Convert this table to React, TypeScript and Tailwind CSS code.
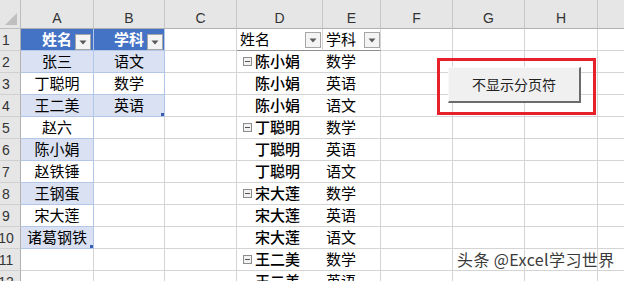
import React from "react";

const FONT = "font-['Noto_Sans_CJK_SC',sans-serif]";

const aVals = ["姓名", "张三", "丁聪明", "王二美", "赵六", "陈小娟", "赵铁锤", "王钢蛋", "宋大莲", "诸葛钢铁"];
const bVals = ["学科", "语文", "数学", "英语"];
const pivot: [string, string, boolean][] = [
  ["陈小娟", "数学", true],
  ["陈小娟", "英语", false],
  ["陈小娟", "语文", false],
  ["丁聪明", "数学", true],
  ["丁聪明", "英语", false],
  ["丁聪明", "语文", false],
  ["宋大莲", "数学", true],
  ["宋大莲", "英语", false],
  ["宋大莲", "语文", false],
  ["王二美", "数学", true],
  ["王二美", "英语", false],
];

function FilterBtn() {
  return (
    <div className="w-[16px] h-[16px] bg-[#f4f4f4] border border-[#a6a6a6] flex items-center justify-center">
      <svg width="8" height="5" viewBox="0 0 8 5">
        <polygon points="0.5,0.5 7.5,0.5 4,4.5" fill="#5a5a5a" />
      </svg>
    </div>
  );
}

function MinusBox() {
  return (
    <div className="w-[9px] h-[9px] border border-[#8c8c8c] bg-[#f2f2f2] flex items-center justify-center mr-[3px]">
      <div className="w-[5px] h-[1px] bg-[#555]" />
    </div>
  );
}

function Handle() {
  return <div className="absolute right-0 bottom-0 w-[3px] h-[3px] bg-[#3a5fb0]" />;
}

export default function App() {
  const cols = ["A", "B", "C", "D", "E", "F", "G", "H", ""];
  const rows = Array.from({ length: 12 }, (_, i) => i + 1);

  return (
    <div className={`relative w-[624px] h-[281px] overflow-hidden bg-white ${FONT}`}>
      <div className="grid grid-cols-[21px_73px_71px_72px_86px_58px_72px_72px_73px_60px] grid-rows-[29px_repeat(12,22px)]">
        {/* header row */}
        <div className="relative bg-[#e6e6e6] border-r border-b border-[#bdbdbd]">
          <svg className="absolute left-[5px] top-[13px]" width="13" height="13" viewBox="0 0 13 13">
            <polygon points="12,0 12,12 0,12" fill="#bfbfbf" />
          </svg>
        </div>
        {cols.map((c, i) => (
          <div
            key={"h" + i}
            className="bg-[#e6e6e6] border-r border-r-[#c6c6c6] border-b border-b-[#b0b0b0] flex items-end justify-center pb-[3px] text-[14px] leading-none text-[#333] font-['Liberation_Sans',sans-serif]"
          >
            {c}
          </div>
        ))}

        {rows.map((r) => {
          const cells: React.ReactNode[] = [];
          cells.push(
            <div
              key={"r" + r}
              className="bg-[#e6e6e6] border-r border-r-[#b0b0b0] border-b border-b-[#d0d0d0] flex items-center justify-center pr-[8px] pt-[2px] text-[14px] text-[#333] font-['Liberation_Sans',sans-serif]"
            >
              {r}
            </div>
          );
          // A
          if (r === 1) {
            cells.push(
              <div key={"a" + r} className="relative bg-[#4472c4] border-r border-b border-[#b4c6e7] flex items-center justify-center text-[15px] font-bold text-white">
                {aVals[0]}
                <div className="absolute right-[2px] top-[5px]">
                  <FilterBtn />
                </div>
              </div>
            );
          } else if (r <= 10) {
            cells.push(
              <div
                key={"a" + r}
                className={`relative ${r % 2 === 0 ? "bg-[#d9e1f2]" : "bg-white"} border-r border-b border-[#b4c6e7] flex items-center justify-center text-[15px] text-black whitespace-nowrap`}
              >
                {aVals[r - 1]}
                {r === 10 && <Handle />}
              </div>
            );
          } else {
            cells.push(<div key={"a" + r} className="border-r border-b border-[#d4d4d4]" />);
          }
          // B
          if (r === 1) {
            cells.push(
              <div key={"b" + r} className="relative bg-[#4472c4] border-r border-b border-[#b4c6e7] flex items-center justify-center text-[15px] font-bold text-white">
                {bVals[0]}
                <div className="absolute right-[1px] top-[5px]">
                  <FilterBtn />
                </div>
              </div>
            );
          } else if (r <= 4) {
            cells.push(
              <div
                key={"b" + r}
                className={`relative ${r % 2 === 0 ? "bg-[#d9e1f2]" : "bg-white"} border-r border-b border-[#b4c6e7] flex items-center justify-center text-[15px] text-black`}
              >
                {bVals[r - 1]}
                {r === 4 && <Handle />}
              </div>
            );
          } else {
            cells.push(<div key={"b" + r} className="border-r border-b border-[#d4d4d4]" />);
          }
          // C
          cells.push(<div key={"c" + r} className="border-r border-b border-[#d4d4d4]" />);
          // D, E
          if (r === 1) {
            cells.push(
              <div key={"d" + r} className="relative border-r border-r-[#d4d4d4] border-b border-b-[#8f8f8f] flex items-center pl-[3px] text-[15px] text-black">
                姓名
                <div className="absolute right-[1px] top-[3px]">
                  <FilterBtn />
                </div>
              </div>
            );
            cells.push(
              <div key={"e" + r} className="relative border-r border-r-[#d4d4d4] border-b border-b-[#8f8f8f] flex items-center pl-[3px] text-[15px] text-black">
                学科
                <div className="absolute right-0 top-[3px]">
                  <FilterBtn />
                </div>
              </div>
            );
          } else {
            const [name, subj, top] = pivot[r - 2];
            cells.push(
              <div key={"d" + r} className="border-b border-[#d4d4d4] flex items-center pl-[6px] text-[15px] font-medium text-black">
                {top ? <MinusBox /> : <div className="w-[12px]" />}
                {name}
              </div>
            );
            cells.push(
              <div key={"e" + r} className="border-r border-b border-[#d4d4d4] flex items-center pl-[3px] text-[15px] text-black">
                {subj}
              </div>
            );
          }
          ["f", "g", "h", "i"].forEach((k) => {
            cells.push(<div key={k + r} className="border-r border-b border-[#d4d4d4]" />);
          });
          return cells;
        })}
      </div>

      {/* red highlight box */}
      <div className="absolute left-[437px] top-[58px] w-[159px] h-[57px] border-[3px] border-[#e8202a]" />

      {/* button */}
      <div className="absolute left-[448px] top-[67px] w-[133px] h-[36px] bg-[#f0f0f0] border-t border-l border-t-[#fafafa] border-l-[#fafafa] border-r-2 border-b-2 border-r-[#6b6b6b] border-b-[#6b6b6b] flex items-center justify-center text-[14px] text-[#222]">
        不显示分页符
      </div>

      {/* watermark */}
      <div className="absolute left-[457px] top-[249px] text-[16px] leading-[20px] tracking-[0.4px] text-[#3a3a3a] whitespace-nowrap [text-shadow:0_0_2px_#ffffff,0_0_1px_#ffffff]">
        头条 @Excel学习世界
      </div>
    </div>
  );
}
